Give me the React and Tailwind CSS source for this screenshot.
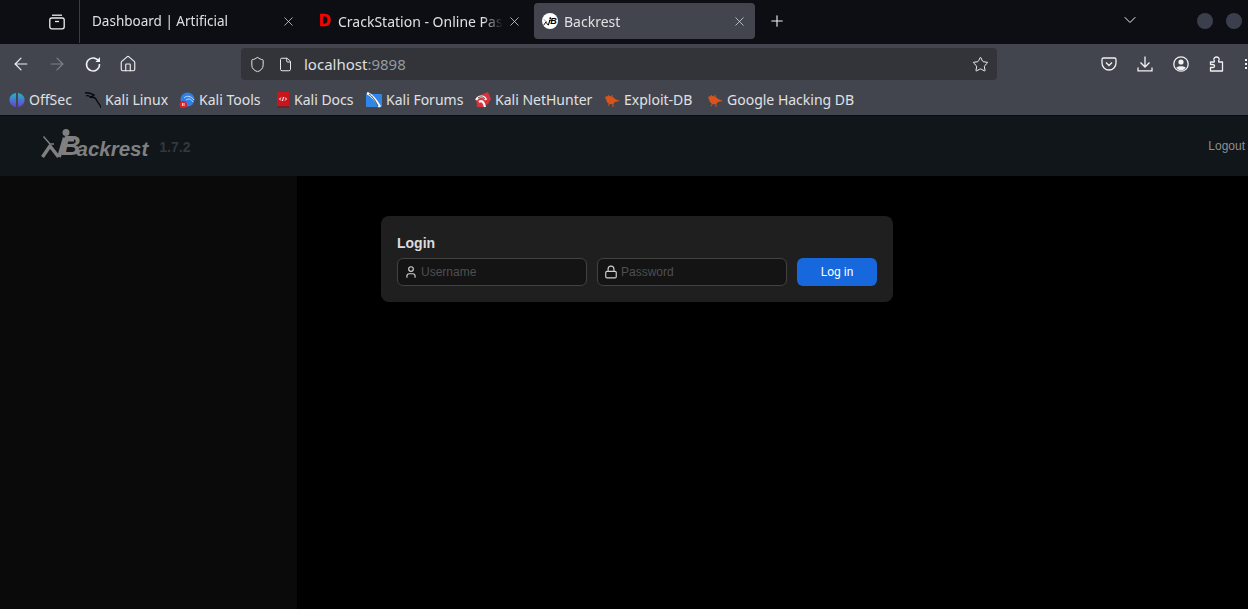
import React from 'react';
import { ArrowLeft, ArrowRight, Home, Shield, File, Star, X, Plus, ChevronDown, User, Lock } from 'lucide-react';

const chromeFont = "font-['Noto_Sans',sans-serif]";

const BackrestFigure = ({ className }) => (
  <svg viewBox="0 0 32 32" className={className} fill="none" stroke="currentColor" strokeLinejoin="round">
    <circle cx="26" cy="4.5" r="3.5" fill="currentColor" stroke="none" />
    <path d="M3.5 8.5 L10 16 M9 16 H14" strokeWidth="1.4" />
    <path d="M2.5 29 L10 18 L18.5 29" strokeWidth="3.4" />
    <path d="M19 29 L24 12 M22.5 11.5 H34" strokeWidth="3.8" />
  </svg>
);

const Tab = ({ icon, title, active, width, textClass = 'text-[14px]' }) => (
  <div className={`flex items-center h-[36px] rounded-[4px] pl-[8px] pr-[8px] ${width} ${active ? 'bg-[#42454e]' : ''}`}>
    {icon}
    <span className={`flex-1 overflow-hidden whitespace-nowrap text-[#dfe0e2] [mask-image:linear-gradient(to_left,transparent_0,black_20px)] ${textClass}`}>{title}</span>
    <X className="w-[15px] h-[15px] text-[#dcdde0] ml-[4px] shrink-0" strokeWidth={1.2} />
  </div>
);

const Bug = () => (
  <svg viewBox="0 0 16 16" className="w-[16px] h-[16px] shrink-0">
    <path d="M1 5 C4 3 9 4 11 7 L16 9 L11 10 C9 13 5 13 3 10 Z" fill="#d9541a" />
    <path d="M4 3 L6 6 M8 3 L8 6 M4 14 L6 11 M9 15 L9 11" stroke="#d9541a" strokeWidth="1" />
  </svg>
);

const bookmarks = [
  {
    label: 'OffSec',
    w: 'w-[44px]',
    icon: (
      <svg viewBox="0 0 16 16" className="w-[16px] h-[16px] shrink-0">
        <defs>
          <linearGradient id="offsec" x1="0" y1="0" x2="0" y2="1">
            <stop offset="0" stopColor="#23b3c9" />
            <stop offset="1" stopColor="#6a3fd0" />
          </linearGradient>
        </defs>
        <path d="M7 1 C2 2 0 5 0.5 9 C1 12 4 15 7 15 Z" fill="url(#offsec)" />
        <path d="M9 1 C14 2 16 5 15.500 9 C15 12 12 15 9 15 Z" fill="url(#offsec)" />
      </svg>
    ),
  },
  {
    label: 'Kali Linux',
    w: 'w-[62px]',
    icon: (
      <svg viewBox="0 0 16 16" className="w-[16px] h-[16px] shrink-0" fill="none" stroke="#08090a" strokeWidth="1.3">
        <path d="M0 1 C4 0 7 2 9 3 L6 5 C8 5 11 6 12 9 C13 11 15 12 16 16" />
        <path d="M1 4 C3 3 5 4 7 6" />
      </svg>
    ),
  },
  {
    label: 'Kali Tools',
    w: 'w-[64px]',
    icon: (
      <svg viewBox="0 0 16 16" className="w-[16px] h-[16px] shrink-0">
        <circle cx="8.500" cy="7.500" r="7" fill="#2f7fe6" />
        <path d="M5 6 C8 3 12 4 15 8 M7 8 C10 6 12 7 14 10" stroke="#cfe2fb" strokeWidth="0.9" fill="none" />
        <rect x="0.500" y="9" width="7.500" height="7" rx="3.500" fill="#d8232a" />
        <path d="M3.500 11 V14 M5 11 V14" stroke="#fff" strokeWidth="0.8" />
      </svg>
    ),
  },
  {
    label: 'Kali Docs',
    w: 'w-[60px]',
    gap: 'gap-[3px]',
    icon: (
      <svg viewBox="0 0 16 16" className="w-[16px] h-[16px] shrink-0">
        <rect x="2" y="0" width="12" height="16" fill="#c8161d" />
        <rect x="2" y="14" width="12" height="2" fill="#7b1c20" />
        <path d="M6 5.500 L4.500 7 L6 8.500 M10 5.500 L11.500 7 L10 8.500 M8.500 5 L7.500 9" stroke="#fff" strokeWidth="1" fill="none" />
      </svg>
    ),
  },
  {
    label: 'Kali Forums',
    w: 'w-[77px]',
    icon: (
      <svg viewBox="0 0 16 16" className="w-[16px] h-[16px] shrink-0">
        <rect x="0" y="2" width="16" height="13" rx="1" fill="#2f86e6" />
        <path d="M1 1 C6 3 10 8 14 15" stroke="#f4f6f8" strokeWidth="2.600" fill="none" />
        <path d="M3 2 C6 4 9 8 12 14" stroke="#15202b" strokeWidth="0.800" fill="none" />
      </svg>
    ),
  },
  {
    label: 'Kali NetHunter',
    w: 'w-[97px]',
    icon: (
      <svg viewBox="0 0 16 16" className="w-[16px] h-[16px] shrink-0">
        <path d="M1 5 L13 0 L16 7 L13 12 L8 15 L2 15 Z" fill="#d8333a" />
        <path d="M1 8 C4 3 10 4 11 8 M4 10 C7 8 9 10 10 15" stroke="#f5f5f5" strokeWidth="2.200" fill="none" />
        <path d="M3 6 C6 4 9 5 10 7" stroke="#222" strokeWidth="0.800" fill="none" />
      </svg>
    ),
  },
  { label: 'Exploit-DB', w: 'w-[71px]', icon: <Bug /> },
  { label: 'Google Hacking DB', w: 'w-[126px]', icon: <Bug /> },
];

export default function App() {
  return (
    <div className="w-[1248px] h-[609px] overflow-hidden bg-black flex flex-col">
      {/* Browser tabs */}
      <div className={`h-[44px] shrink-0 bg-[#0c0e13] flex items-center pb-[2px] ${chromeFont}`}>
        <div className="w-[80px] h-[43px] mt-[1px] flex items-center justify-end border-r border-[#3a3c42] pr-[14px]">
          <svg viewBox="0 0 16 16" className="w-[16px] h-[16px]" fill="none" stroke="#eeeeef" strokeWidth="1.3">
            <path d="M3 1.200 H13" />
            <rect x="0.800" y="4" width="14.400" height="10.800" rx="2" />
            <path d="M6 7.500 H10" />
          </svg>
        </div>
        <div className="w-[4px]" />
        <Tab width="w-[220px]" textClass="text-[13.5px]" title="Dashboard | Artificial" />
        <div className="w-[3px]" />
        <Tab
          width="w-[223px]"
          title="CrackStation - Online Password"
          icon={
            <span className="w-[23px] pl-[4px] text-[16px] leading-none font-bold text-[#f00] font-['Liberation_Sans',sans-serif] [-webkit-text-stroke:0.6px_#f00] shrink-0">
              D
            </span>
          }
        />
        <div className="w-[4px]" />
        <Tab
          active
          width="w-[221px]"
          title="Backrest"
          icon={
            <span className="w-[16px] h-[16px] rounded-full bg-white flex items-center justify-center mr-[6px] shrink-0 text-[9px] leading-none font-bold italic text-black font-['Liberation_Sans',sans-serif]">
              <BackrestFigure className="w-[9px] h-[9px] text-black -mr-[2px]" />B
            </span>
          }
        />
        <Plus className="w-[18px] h-[18px] text-[#f1f1f3] ml-[13px]" strokeWidth={1.5} />
        <ChevronDown className="w-[20px] h-[20px] text-[#f1f1f3] ml-[334px] -mt-[2px]" strokeWidth={1.2} />
        <span className="w-[16px] h-[16px] rounded-full bg-[#3b3f4d] ml-[57px]" />
        <span className="w-[16px] h-[16px] rounded-full bg-[#3b3f4d] ml-[13px]" />
      </div>

      {/* Address bar */}
      <div className={`h-[40px] shrink-0 bg-[#42454e] flex items-center ${chromeFont}`}>
        <div className="w-[241px] flex items-center gap-[16px] pl-[11px]">
          <ArrowLeft className="w-[20px] h-[20px] text-[#f1f1f3]" strokeWidth={1.4} />
          <ArrowRight className="w-[20px] h-[20px] text-[#7e8086]" strokeWidth={1.4} />
          <svg viewBox="0 0 20 20" className="w-[20px] h-[20px]" fill="none" stroke="#f1f1f3" strokeWidth="1.500">
            <path d="M15.800 7.500 A6.500 6.500 0 1 0 16.500 10" />
            <path d="M12.500 8 H17 V3 Z" fill="#f1f1f3" stroke="none" />
          </svg>
          <Home className="w-[18px] h-[18px] text-[#f1f1f3]" strokeWidth={1.5} />
        </div>
        <div className="w-[756px] h-[32px] rounded-[4px] bg-[#32343a] flex items-center pl-[8px] pr-[8px]">
          <Shield className="w-[17px] h-[17px] text-[#e8e8ea]" strokeWidth={1.4} />
          <File className="w-[15px] h-[15px] text-[#e8e8ea] ml-[12px]" strokeWidth={1.6} />
          <span className="ml-[11px] text-[15px] text-[#dfe0e2]">
            localhost<span className="text-[#97999e]">:9898</span>
          </span>
          <Star className="w-[17px] h-[17px] text-[#f1f1f3] ml-auto" strokeWidth={1.4} />
        </div>
        <div className="flex-1 flex items-center pl-[104px] gap-[20px]">
          <svg viewBox="0 0 16 16" className="w-[16px] h-[16px] shrink-0" fill="none" stroke="#f1f1f3" strokeWidth="1.300">
            <path d="M2.500 2 H13.500 A1.500 1.500 0 0 1 15 3.500 V7 A7 7 0 0 1 1 7 V3.500 A1.500 1.500 0 0 1 2.500 2 Z" />
            <path d="M5 6.500 L8 9.500 L11 6.500" />
          </svg>
          <svg viewBox="0 0 16 16" className="w-[16px] h-[16px] shrink-0" fill="none" stroke="#f1f1f3" strokeWidth="1.300">
            <path d="M8 0.500 V11 M3.500 6.500 L8 11 L12.500 6.500 M1 11.500 V14.800 H15 V11.500" />
          </svg>
          <svg viewBox="0 0 16 16" className="w-[16px] h-[16px] shrink-0">
            <circle cx="8" cy="8" r="7.200" fill="none" stroke="#f1f1f3" strokeWidth="1.300" />
            <circle cx="8" cy="6" r="2.600" fill="#f1f1f3" />
            <path d="M3.200 12 C4 9.800 12 9.800 12.800 12 L10 14 H6 Z" fill="#f1f1f3" />
          </svg>
          <svg viewBox="0 0 16 16" className="w-[16px] h-[16px] shrink-0" fill="none" stroke="#f1f1f3" strokeWidth="1.300" strokeLinejoin="round">
            <path d="M1.500 6 H5 C5.500 6 5.500 5 5 4 C4.500 2 6 1 7.500 1 C9 1 10.500 2 10 4 C9.500 5 9.500 6 10 6 H13.500 V15 H1.500 V11.500 H4 C6 11.500 6 8.500 4 8.500 H1.500 Z" />
          </svg>
          <div className="flex flex-col gap-[2px] shrink-0">
            <span className="w-[2px] h-[2px] bg-[#f1f1f3]" />
            <span className="w-[2px] h-[2px] bg-[#f1f1f3]" />
            <span className="w-[2px] h-[2px] bg-[#f1f1f3]" />
          </div>
        </div>
      </div>

      {/* Bookmarks */}
      <div className={`h-[31px] shrink-0 bg-[#42454e] flex items-center gap-[12px] pl-[9px] ${chromeFont}`}>
        {bookmarks.map((b) => (
          <div key={b.label} className={`flex items-center ${b.gap || 'gap-[4px]'}`}>
            {b.icon}
            <span className={`text-[14px] text-[#e0e1e3] whitespace-nowrap ${b.w}`}>{b.label}</span>
          </div>
        ))}
      </div>

      {/* Backrest app */}
      <div className="flex-1 flex flex-col font-['Liberation_Sans',sans-serif]">
        <div className="h-[61px] shrink-0 bg-[#11161a] border-t border-[#0a0c0f] flex items-center justify-between pl-[40px] pr-[3px]">
          <div className="flex items-center mt-[3px]">
            <BackrestFigure className="w-[32px] h-[32px] text-[#808080] -mr-[11px] -translate-y-[4px] overflow-visible" />
            <span className="text-[27px] leading-none font-bold italic text-[#808080] -mt-[2px]">B</span>
            <span className="text-[20.5px] leading-none font-bold italic text-[#808080] -ml-[4px] mt-[3px]">ackrest</span>
            <span className="text-[14px] font-bold text-[#34373b] ml-[11px] -mt-[1px]">1.7.2</span>
          </div>
          <span className="text-[12px] text-[#8d8f91]">Logout</span>
        </div>

        <div className="flex-1 flex">
          <div className="w-[297px] bg-[#0a0a0a]" />
          <div className="flex-1 bg-black pl-[84px] pt-[40px]">
            <div className="w-[512px] h-[86px] rounded-[8px] bg-[#1f1f1f] px-[16px] pt-[18px]">
              <div className="text-[14px] leading-[18px] font-bold text-[#dcdcdc] mb-[6px]">Login</div>
              <div className="flex gap-[10px]">
                <div className="w-[190px] h-[28px] rounded-[6px] border border-[#424242] bg-[#141414] flex items-center pl-[6px] gap-[3px]">
                  <User className="w-[14px] h-[14px] text-[#d0d0d0]" strokeWidth={2} />
                  <span className="text-[12px] text-[#4f4f4f]">Username</span>
                </div>
                <div className="w-[190px] h-[28px] rounded-[6px] border border-[#424242] bg-[#141414] flex items-center pl-[6px] gap-[3px]">
                  <Lock className="w-[14px] h-[14px] text-[#d0d0d0]" strokeWidth={2} />
                  <span className="text-[12px] text-[#4f4f4f]">Password</span>
                </div>
                <button className="w-[80px] h-[28px] rounded-[6px] bg-[#1668dc] text-[12px] text-white font-['Roboto',sans-serif]">Log in</button>
              </div>
            </div>
          </div>
        </div>
      </div>
    </div>
  );
}
